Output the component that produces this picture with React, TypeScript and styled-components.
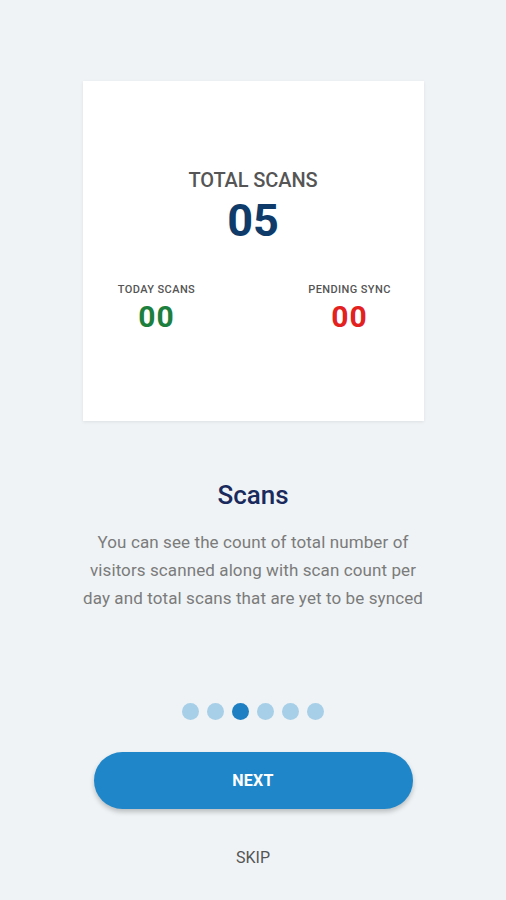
import React from 'react';
import styled, { createGlobalStyle } from 'styled-components';

const GlobalStyle = createGlobalStyle`
  html, body {
    margin: 0;
    padding: 0;
    background: #eff3f5;
  }
  body {
    font-family: Roboto, "Liberation Sans", sans-serif;
  }
`;

const steps = 6;
const activeStep = 2;

const App: React.FC = () => {
    return (
        <>
            <GlobalStyle />
            <Screen>
                <StatsCard>
                    <TotalLabel>TOTAL SCANS</TotalLabel>
                    <TotalValue>05</TotalValue>
                    <SubStats>
                        <SubStat>
                            <SubLabel>TODAY SCANS</SubLabel>
                            <SubValue $color="#1d7f3d">00</SubValue>
                        </SubStat>
                        <SubStat>
                            <SubLabel>PENDING SYNC</SubLabel>
                            <SubValue $color="#e3211f">00</SubValue>
                        </SubStat>
                    </SubStats>
                </StatsCard>

                <Title>Scans</Title>
                <Description>
                    You can see the count of total number of visitors scanned along with scan count per
                    day and total scans that are yet to be synced
                </Description>

                <Dots>
                    {Array.from({ length: steps }).map((_, i) => (
                        <Dot key={i} $active={i === activeStep} />
                    ))}
                </Dots>

                <NextButton>NEXT</NextButton>
                <SkipButton>SKIP</SkipButton>
            </Screen>
        </>
    );
};

export default App;

// Styled components
const Screen = styled.div`
  width: 506px;
  height: 900px;
  display: flex;
  flex-direction: column;
  align-items: center;
  padding-top: 81px;
  box-sizing: border-box;
  background: #eff3f5;
`;

const StatsCard = styled.div`
  width: 341px;
  height: 340px;
  box-sizing: border-box;
  padding-top: 87px;
  background: #ffffff;
  box-shadow: 0 1px 3px rgba(0, 0, 0, 0.08);
  display: flex;
  flex-direction: column;
  align-items: center;
`;

const TotalLabel = styled.div`
  font-size: 20px;
  line-height: 24px;
  font-weight: 500;
  color: #555555;
  letter-spacing: -0.1px;
`;

const TotalValue = styled.div`
  margin-top: 6px;
  font-size: 45px;
  line-height: 45px;
  font-weight: 700;
  color: #0e3b69;
`;

const SubStats = styled.div`
  width: 100%;
  margin-top: 41px;
  padding: 0 20px;
  box-sizing: border-box;
  display: flex;
  justify-content: space-between;
`;

const SubStat = styled.div`
  width: 108px;
  display: flex;
  flex-direction: column;
  align-items: center;
`;

const SubLabel = styled.div`
  font-size: 11px;
  line-height: 12px;
  font-weight: 500;
  color: #555555;
  letter-spacing: 0.4px;
`;

const SubValue = styled.div<{ $color: string }>`
  margin-top: 6px;
  font-size: 30px;
  line-height: 30px;
  font-weight: 700;
  color: ${p => p.$color};
  letter-spacing: 1px;
`;

const Title = styled.h2`
  margin: 59px 0 0;
  font-size: 26px;
  line-height: 30px;
  font-weight: 500;
  color: #1a2a5c;
`;

const Description = styled.p`
  margin: 18px 0 0;
  width: 342px;
  text-align: center;
  font-size: 17px;
  line-height: 28px;
  font-weight: 400;
  letter-spacing: 0.1px;
  color: #7b7b7b;
`;

const Dots = styled.div`
  margin-top: 91px;
  display: flex;
  gap: 8px;
`;

const Dot = styled.span<{ $active: boolean }>`
  width: 17px;
  height: 17px;
  border-radius: 50%;
  background: ${p => (p.$active ? '#1f7fc3' : '#a7cfe8')};
`;

const NextButton = styled.button`
  margin-top: 32px;
  width: 319px;
  height: 57px;
  border: none;
  border-radius: 29px;
  background: #1f87c9;
  color: #ffffff;
  font-family: Roboto, "Liberation Sans", sans-serif;
  font-size: 16px;
  font-weight: 700;
  letter-spacing: 0.3px;
  box-shadow: 0 3px 5px rgba(0, 0, 0, 0.22);
  cursor: pointer;
`;

const SkipButton = styled.button`
  margin-top: 40px;
  border: none;
  background: none;
  padding: 0;
  font-family: Roboto, "Liberation Sans", sans-serif;
  font-size: 16px;
  line-height: 18px;
  font-weight: 400;
  color: #555555;
  cursor: pointer;
`;
